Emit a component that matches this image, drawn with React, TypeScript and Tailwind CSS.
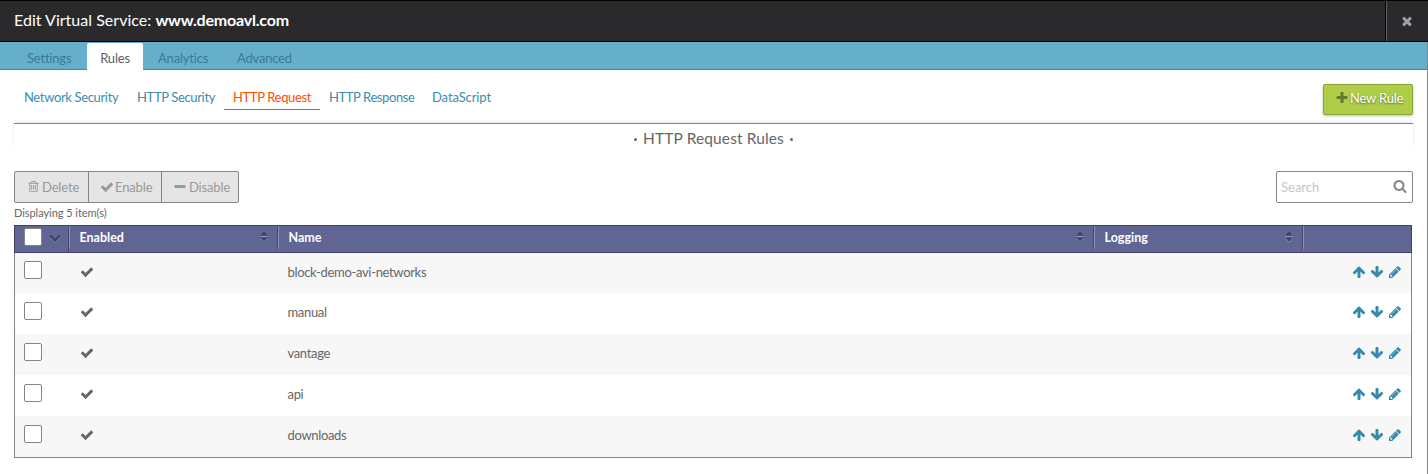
import React from 'react';

const PATHS = {
  check:
    'M1671 566q0 40-28 68l-724 724-136 136q-28 28-68 28t-68-28l-136-136-362-362q-28-28-28-68t28-68l136-136q28-28 68-28t68 28l294 295 656-657q28-28 68-28t68 28l136 136q28 28 28 68z',
  times:
    'M1490 1322q0 40-28 68l-136 136q-28 28-68 28t-68-28l-294-294-294 294q-28 28-68 28t-68-28l-136-136q-28-28-28-68t28-68l294-294-294-294q-28-28-28-68t28-68l136-136q28-28 68-28t68 28l294 294 294-294q28-28 68-28t68 28l136 136q28 28 28 68t-28 68l-294 294 294 294q28 28 28 68z',
  plus: 'M1600 736v192q0 40-28 68t-68 28h-416v416q0 40-28 68t-68 28h-192q-40 0-68-28t-28-68v-416h-416q-40 0-68-28t-28-68v-192q0-40 28-68t68-28h416v-416q0-40 28-68t68-28h192q40 0 68 28t28 68v416h416q40 0 68 28t28 68z',
  minus:
    'M1600 736v192q0 40-28 68t-68 28h-1216q-40 0-68-28t-28-68v-192q0-40 28-68t68-28h1216q40 0 68 28t28 68z',
  up: 'M1675 971q0 51-37 90l-75 75q-38 38-91 38-54 0-90-38l-294-293v704q0 52-37.5 84.5t-90.5 32.5h-128q-53 0-90.5-32.5t-37.5-84.5v-704l-294 293q-36 38-90 38t-90-38l-75-75q-38-38-38-90 0-53 38-91l651-651q35-37 90-37 54 0 91 37l651 651q37 39 37 91z',
  pencil:
    'M491 1536l91-91-235-235-91 91v107h128v128h107zm523-928q0-22-22-22-10 0-17 7l-542 542q-7 7-7 17 0 22 22 22 10 0 17-7l542-542q7-7 7-17zm-54-192l416 416-832 832h-416v-416zm683 96q0 53-37 90l-166 166-416-416 166-165q36-38 90-38 53 0 91 38l235 234q37 39 37 91z',
  trash:
    'M704 736v576q0 14-9 23t-23 9h-64q-14 0-23-9t-9-23v-576q0-14 9-23t23-9h64q14 0 23 9t9 23zm256 0v576q0 14-9 23t-23 9h-64q-14 0-23-9t-9-23v-576q0-14 9-23t23-9h64q14 0 23 9t9 23zm256 0v576q0 14-9 23t-23 9h-64q-14 0-23-9t-9-23v-576q0-14 9-23t23-9h64q14 0 23 9t9 23zm128 724v-948h-896v948q0 22 7 40.5t14.5 27 10.5 8.5h832q3 0 10.5-8.5t14.5-27 7-40.5zm-672-1076h448l-48-117q-7-9-17-11h-317q-10 2-17 11zm928 32v64q0 14-9 23t-23 9h-96v948q0 83-47 143.5t-113 60.5h-832q-66 0-113-58.5t-47-141.5v-952h-96q-14 0-23-9t-9-23v-64q0-14 9-23t23-9h309l70-167q15-37 54-63t79-26h320q40 0 79 26t54 63l70 167h309q14 0 23 9t9 23z',
  search:
    'M1216 832q0-185-131.5-316.5t-316.5-131.5-316.5 131.5-131.5 316.5 131.5 316.5 316.5 131.5 316.5-131.5 131.5-316.5zm512 832q0 52-38 90t-90 38q-54 0-90-38l-343-342q-179 124-399 124-143 0-273.5-55.5t-225-150-150-225-55.5-273.5 55.5-273.5 150-225 225-150 273.5-55.5 273.5 55.5 225 150 150 225 55.5 273.5q0 220-124 399l343 343q37 37 37 90z',
};

function Icon({ name, className }: { name: keyof typeof PATHS; className?: string }) {
  return (
    <svg viewBox="0 0 1792 1792" fill="currentColor" className={`shrink-0 ${className ?? ''}`}>
      <path d={PATHS[name]} />
    </svg>
  );
}

function Sorter() {
  return (
    <svg viewBox="0 0 8 12" className="h-3 w-2 shrink-0">
      <path d="M4 0.5L7.8 4.6H0.2z" fill="#3f4267" />
      <path d="M0 5.5H8" stroke="#8f93bb" />
      <path d="M0.2 6.4H7.8L4 10.5z" fill="#3f4267" />
      <path d="M0.5 7.5L4 11.3L7.5 7.5" fill="none" stroke="#8f93bb" strokeWidth="0.7" />
    </svg>
  );
}

function Box({ className }: { className?: string }) {
  return (
    <span
      className={`block h-[18px] w-[18px] shrink-0 rounded-[2px] border border-[#858585] bg-white ${className ?? ''}`}
    />
  );
}

function HeaderCell({ label, className }: { label: string; className: string }) {
  return (
    <div className={`flex h-[26px] shrink-0 ${className}`}>
      <div className="h-[23px] w-px bg-[#8f93bb]" />
      <div className="flex h-[22px] flex-1 items-center justify-between pl-[9.5px] pr-[9px]">
        <span className="pt-px text-[12.5px] font-bold text-white">{label}</span>
        <Sorter />
      </div>
      <div className="h-[23px] w-px bg-[#434570]" />
    </div>
  );
}

const rules = ['block-demo-avi-networks', 'manual', 'vantage', 'api', 'downloads'];

export default function App() {
  return (
    <div className="flex h-[474px] w-[1428px] flex-col overflow-hidden bg-white font-['Lato',sans-serif] text-[13px] leading-4 text-[#666]">
      <header className="flex h-[42px] shrink-0 border-y border-black bg-[#2a2a2c]">
        <h1 className="flex-1 pl-[14px] text-[16px] leading-[38px] text-white">
          <span className="tracking-[0.02px]">Edit Virtual Service: </span>
          <b className="tracking-[-0.2px]">www.demoavl.com</b>
        </h1>
        <div className="w-px bg-black" />
        <button className="flex w-[42px] items-center justify-center border-l border-[#5e5e60] pb-px pr-px text-[#a0a0a2]">
          <Icon name="times" className="h-[14px] w-[14px]" />
        </button>
      </header>

      <div className="flex flex-1 flex-col border-r border-[#858585]">
        <nav className="flex h-7 shrink-0 border-b border-[#398aa7] bg-[#66afcb] tracking-[-0.2px] text-[#397b96]">
          <span className="w-[87px] pl-[27px] pt-2">Settings</span>
          <span className="mt-px h-[27px] w-14 rounded-t-[2px] bg-white pt-[7px] text-center text-[#606060]">Rules</span>
          <span className="w-[94px] pl-[15px] pt-2">Analytics</span>
          <span className="pt-2">Advanced</span>
        </nav>

        <div className="flex h-[53px] shrink-0 justify-between pl-[23px] pr-[14px] pt-[14px]">
          <div className="flex h-[26px] tracking-[-0.35px] text-[#3c8dac]">
            <span className="w-[114px] pl-px pt-[5px]">Network Security</span>
            <span className="w-[87px] pt-[5px]">HTTP Security</span>
            <span className="w-24 border-b border-[#fc4c02] pt-[5px] text-center text-[#fc4c02]">HTTP Request</span>
            <span className="w-28 pl-[9px] pt-[5px] tracking-[-0.4px]">HTTP Response</span>
            <span className="pt-[5px] tracking-[-0.1px]">DataScript</span>
          </div>
          <button className="flex h-[31px] w-[90px] items-center rounded-[2px] border border-[#8ba536] bg-[#afcd49] pb-[3px] pl-[11px] tracking-[-0.2px] text-white shadow-[0_1px_3px_rgba(0,0,0,0.25)] [text-shadow:0_1px_2px_rgba(0,0,0,0.5)]">
            <Icon name="plus" className="mr-px h-[14px] w-[14px] text-[#65792a]" />
            New Rule
          </button>
        </div>

        <section className="ml-[14px] mr-[14px] flex h-12 shrink-0 flex-col">
          <div className="h-6 border-t border-[#858585] shadow-[0_-1px_3px_rgba(0,0,0,0.12)] [clip-path:inset(-4px_-3px_0_-3px)]">
            <h2 className="flex items-center justify-center gap-[6px] pt-[5px] text-[15.5px] leading-[18px] tracking-[0.12px]">
              <span className="mt-[3px] h-[3px] w-[3px] rounded-full bg-[#666]" />
              HTTP Request Rules
              <span className="mt-[3px] h-[3px] w-[3px] rounded-full bg-[#666]" />
            </h2>
          </div>
        </section>

        <div className="flex h-8 shrink-0 justify-between pl-[14px] pr-[14px]">
          <div className="flex w-[225px] rounded-[2px] border border-[#858585] bg-[#e5e5e5] tracking-[-0.15px] text-[#999]">
            <span className="flex w-[74px] items-center border-r border-[#858585] pb-px pl-[12px]">
              <Icon name="trash" className="mr-[2px] h-[13px] w-[13px]" />
              Delete
            </span>
            <span className="flex w-[73px] items-center border-r border-[#858585] pb-px pl-[11px]">
              <Icon name="check" className="mr-[1px] h-[14px] w-[14px]" />
              Enable
            </span>
            <span className="flex items-center pb-px pl-[11px]">
              <Icon name="minus" className="mr-[2px] h-[14px] w-[14px]" />
              Disable
            </span>
          </div>
          <div className="flex w-[137px] items-center justify-between rounded-[2px] border border-[#858585] pb-px pl-1 pr-[5px] text-[#c6c6c6]">
            Search
            <Icon name="search" className="mb-px h-[14px] w-[14px] text-[#858585]" />
          </div>
        </div>

        <p className="h-[22px] shrink-0 pl-[14px] pt-[2px] text-[11px] tracking-[-0.05px]">Displaying 5 item(s)</p>

        <div className="mx-[14px] w-[1398px]">
          <div className="flex h-7 border border-[#3f4267] bg-[#606594]">
            <div className="flex w-[54px] border-r border-[#434570] pl-[9px]">
              <Box className="mt-[2px]" />
              <svg viewBox="0 0 12 9" className="ml-[7px] mt-2 h-[9px] w-3" fill="none">
                <path d="M1 2.5L6 7.5L11 2.5" stroke="#8f93bb" strokeWidth="2" />
                <path d="M1 1.5L6 6.5L11 1.5" stroke="#3f4267" strokeWidth="2.4" />
              </svg>
            </div>
            <HeaderCell label="Enabled" className="w-[209px]" />
            <HeaderCell label="Name" className="w-[816px]" />
            <HeaderCell label="Logging" className="w-[209px]" />
            <div className="h-[23px] w-px bg-[#8f93bb]" />
          </div>
          <div className="border border-t-0 border-[#858585]">
            {rules.map((rule) => (
              <div key={rule} className="group flex h-[41px] odd:bg-[#f7f7f7] first:h-10">
                <div className="w-16 pl-[9px] pt-[9px] group-first:pt-2">
                  <Box />
                </div>
                <div className="flex w-[209px] items-start pl-px pt-3">
                  <Icon name="check" className="h-[14px] w-[14px]" />
                </div>
                <div className="-ml-[0.5px] flex-1 pt-[11px] tracking-[-0.33px]">{rule}</div>
                <div className="flex w-[61px] items-start gap-1 pl-[1.5px] pt-3 text-[#3689ab]">
                  <Icon name="up" className="h-[14px] w-[14px]" />
                  <Icon name="up" className="h-[14px] w-[14px] rotate-180" />
                  <Icon name="pencil" className="h-[14px] w-[14px]" />
                </div>
              </div>
            ))}
          </div>
        </div>
      </div>
    </div>
  );
}
